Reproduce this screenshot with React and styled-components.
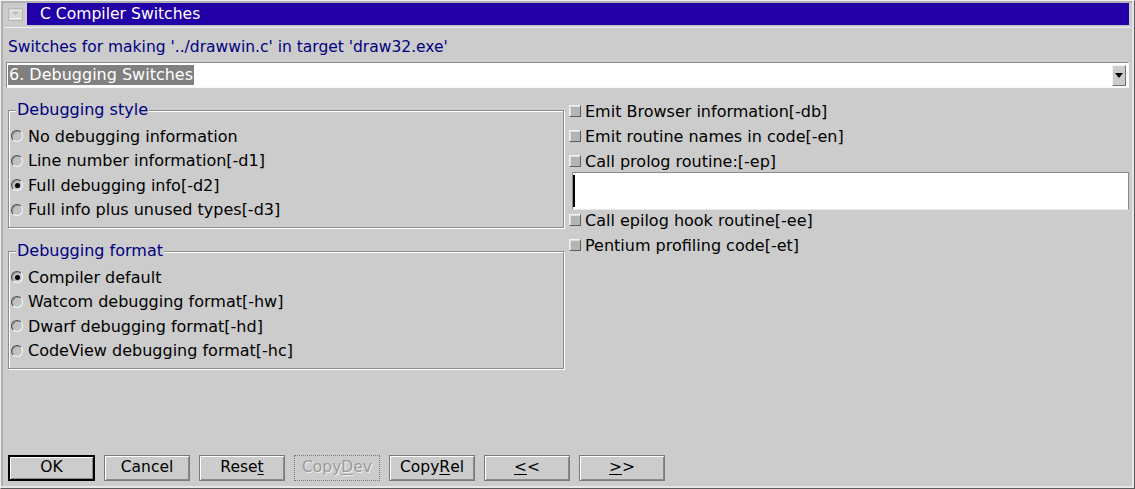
import React from "react";
import styled, { createGlobalStyle } from "styled-components";

const GlobalStyle = createGlobalStyle`
  html, body {
    margin: 0;
    padding: 0;
    background: #cccccc;
  }
  body {
    font-family: "DejaVu Sans", "Liberation Sans", sans-serif;
    font-size: 16px;
    color: #000;
  }
`;

const Window = styled.div`
  width: 1135px;
  height: 489px;
  box-sizing: border-box;
  display: flex;
  flex-direction: column;
  background: #cccccc;
  border: 1px solid;
  border-color: #f0f0f0 #5a5a5a #5a5a5a #f0f0f0;
  padding: 2px 3px 3px 3px;
  box-shadow: inset -2px -2px 0 #e6e6e6, inset 2px 2px 0 #b0b0b0;
`;

const TitleRow = styled.div`
  display: flex;
  height: 22px;
  padding-bottom: 2px;
  border-bottom: 1px solid #efefef;
`;

const SysMenu = styled.div`
  width: 23px;
  display: flex;
  align-items: center;
  justify-content: center;
`;

const Caption = styled.div`
  flex: 1;
  margin-right: 2px;
  background: #2200a8;
  color: #fff;
  font-size: 15.6px;
  line-height: 22px;
  padding-left: 13px;
`;

const Body = styled.div`
  flex: 1;
  display: flex;
  flex-direction: column;
  padding: 0 2px;
`;

const Subtitle = styled.div`
  color: #000080;
  font-size: 15.5px;
  margin: 9px 0 0 2px;
  line-height: 20px;
`;

const Combo = styled.div`
  margin-top: 5px;
  height: 26px;
  box-sizing: border-box;
  display: flex;
  align-items: center;
  background: #fff;
  border: 1px solid;
  border-color: #8a8a8a #fafafa #fafafa #8a8a8a;
  padding: 0 2px 0 1px;
`;

const Selected = styled.span`
  background: #808080;
  color: #fff;
  line-height: 20px;
  padding: 0 1px;
`;

const ComboFill = styled.div`
  flex: 1;
`;

const DropButton = styled.div`
  width: 14px;
  height: 21px;
  box-sizing: border-box;
  background: #cccccc;
  border: 1px solid;
  border-color: #f4f4f4 #6e6e6e #6e6e6e #f4f4f4;
  display: flex;
  align-items: center;
  justify-content: center;
`;

const Main = styled.div`
  display: grid;
  grid-template-columns: 556px 1fr;
  column-gap: 5px;
  margin-top: 13px;
  padding-left: 2px;
  align-items: start;
`;

const LeftColumn = styled.div`
  display: flex;
  flex-direction: column;
  gap: 14px;
`;

const Group = styled.fieldset`
  margin: 0;
  padding: 5px 2px 5px 2px;
  border: 1px solid #8c8c8c;
  box-shadow: 1px 1px 0 #fff, inset 1px 1px 0 #fff;
  min-width: 0;
`;

const Legend = styled.legend`
  color: #000080;
  line-height: 18px;
  padding: 0 1px;
  margin-left: 5px;
  background: #cccccc;
`;

const Radio = styled.div`
  display: flex;
  align-items: center;
  height: 24.5px;
`;

const RadioDot = styled.span`
  width: 12px;
  height: 12px;
  box-sizing: border-box;
  border-radius: 50%;
  border: 1px solid;
  border-color: #4e4e4e #fafafa #fafafa #4e4e4e;
  background: #c2c2c2;
  box-shadow: inset 1px 1px 0 #9a9a9a;
  margin-right: 5px;
  display: flex;
  align-items: center;
  justify-content: center;

  &::after {
    content: "";
    width: 5px;
    height: 5px;
    border-radius: 50%;
    background: ${(p) => (p.$on ? "#000" : "transparent")};
  }
`;

const RightColumn = styled.div`
  display: flex;
  flex-direction: column;
`;

const Check = styled.div`
  display: flex;
  align-items: center;
  height: 20px;
  margin-bottom: ${(p) => p.$gap}px;
`;

const CheckBox = styled.span`
  width: 12px;
  height: 12px;
  box-sizing: border-box;
  border: 1px solid;
  border-color: #f4f4f4 #5e5e5e #5e5e5e #f4f4f4;
  background: #b4b4b4;
  box-shadow: inset 1px 1px 0 #dcdcdc;
  margin: 0 4px 0 0;
`;

const TextBox = styled.div`
  margin-left: 3px;
  height: 38px;
  box-sizing: border-box;
  background: #fff;
  border: 1px solid;
  border-color: #8a8a8a #8a8a8a #e8e8e8 #8a8a8a;
  display: flex;
  align-items: center;
`;

const Caret = styled.span`
  width: 2px;
  height: 32px;
  background: #000;
`;

const Spacer = styled.div`
  flex: 1;
`;

const ButtonRow = styled.div`
  display: flex;
  gap: 9px;
  padding: 0 0 4px 2px;
`;

const Button = styled.div`
  width: ${(p) => (p.$default ? 87 : 86)}px;
  height: 26px;
  box-sizing: border-box;
  display: flex;
  align-items: center;
  justify-content: center;
  font-size: 15.5px;
  border: ${(p) =>
    p.$default
      ? "2px solid #000"
      : p.$disabled
      ? "1px dotted #7a7a7a"
      : "1px solid #7a7a7a"};
  box-shadow: ${(p) =>
    p.$disabled ? "none" : "inset 1px 1px 0 #fff, inset -1px -1px 0 #8a8a8a"};
  color: ${(p) => (p.$disabled ? "#9a9a9a" : "#000")};
  text-shadow: ${(p) => (p.$disabled ? "1px 1px 0 #f0f0f0" : "none")};
  background: #cccccc;
  line-height: 1;

  u {
    text-underline-offset: 2px;
  }
`;

const styleOptions = [
  { label: "No debugging information" },
  { label: "Line number information[-d1]" },
  { label: "Full debugging info[-d2]", on: true },
  { label: "Full info plus unused types[-d3]" },
];

const formatOptions = [
  { label: "Compiler default", on: true },
  { label: "Watcom debugging format[-hw]" },
  { label: "Dwarf debugging format[-hd]" },
  { label: "CodeView debugging format[-hc]" },
];

const RadioGroup = ({ title, options }) => (
  <Group>
    <Legend>{title}</Legend>
    {options.map((o) => (
      <Radio key={o.label}>
        <RadioDot $on={o.on} />
        {o.label}
      </Radio>
    ))}
  </Group>
);

const CheckItem = ({ label, gap = 5 }) => (
  <Check $gap={gap}>
    <CheckBox />
    {label}
  </Check>
);

const App = () => {
  return (
    <>
      <GlobalStyle />
      <Window>
        <TitleRow>
          <SysMenu>
            <svg width="15" height="13" viewBox="0 0 15 13">
              <rect x="0.5" y="0.5" width="14" height="12" fill="#d8d8d8" stroke="#b8b8b8" />
              <path d="M2 3 L13 3 L7.5 8 Z" fill="#bdbdbd" stroke="#f6f6f6" strokeWidth="0.8" />
              <line x1="2" y1="10.5" x2="13" y2="10.5" stroke="#f6f6f6" />
            </svg>
          </SysMenu>
          <Caption>C Compiler Switches</Caption>
        </TitleRow>
        <Body>
          <Subtitle>
            Switches for making '../drawwin.c' in target 'draw32.exe'
          </Subtitle>
          <Combo>
            <Selected>6. Debugging Switches</Selected>
            <ComboFill />
            <DropButton>
              <svg width="8" height="5" viewBox="0 0 8 5">
                <path d="M0 0 L8 0 L4 5 Z" fill="#000" />
              </svg>
            </DropButton>
          </Combo>
          <Main>
            <LeftColumn>
              <RadioGroup title="Debugging style" options={styleOptions} />
              <RadioGroup title="Debugging format" options={formatOptions} />
            </LeftColumn>
            <RightColumn>
              <CheckItem label="Emit Browser information[-db]" />
              <CheckItem label="Emit routine names in code[-en]" />
              <CheckItem label="Call prolog routine:[-ep]" gap={1} />
              <TextBox>
                <Caret />
              </TextBox>
              <CheckItem label="Call epilog hook routine[-ee]" />
              <CheckItem label="Pentium profiling code[-et]" />
            </RightColumn>
          </Main>
          <Spacer />
          <ButtonRow>
            <Button $default>OK</Button>
            <Button>Cancel</Button>
            <Button>
              Rese<u>t</u>
            </Button>
            <Button $disabled>
              Copy<u>D</u>ev
            </Button>
            <Button>
              Copy<u>R</u>el
            </Button>
            <Button>
              <u>&lt;</u>&lt;
            </Button>
            <Button>
              <u>&gt;</u>&gt;
            </Button>
          </ButtonRow>
        </Body>
      </Window>
    </>
  );
};

export default App;
